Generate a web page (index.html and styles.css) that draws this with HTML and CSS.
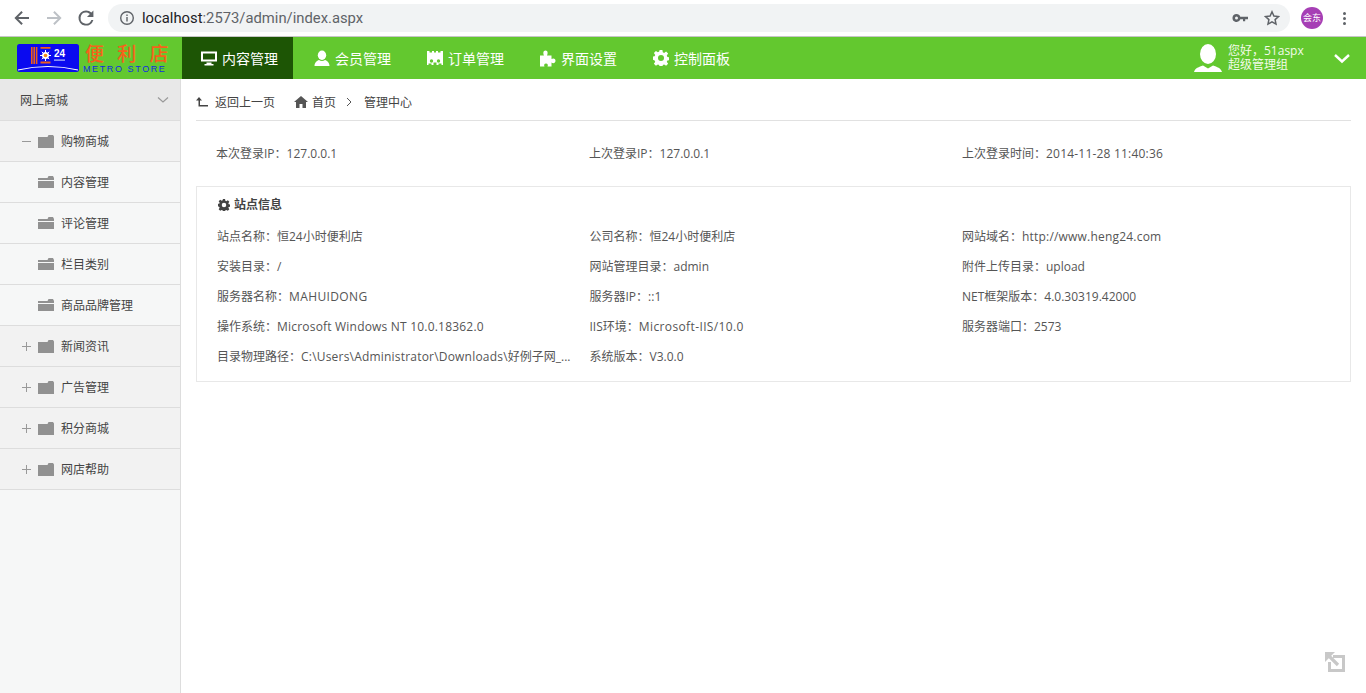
FILE: index.html
```html
<!DOCTYPE html>
<html lang="zh-CN">
<head>
<meta charset="utf-8">
<title>管理中心</title>
<link rel="stylesheet" href="styles.css">
</head>
<body>
<div class="chrome">
  <svg class="cb first" width="18" height="18" viewBox="0 0 18 18"><path d="M16 8H5.2l4.6-4.6L8.4 2 1.4 9l7 7 1.4-1.4L5.2 10H16z" fill="#5f6368"/></svg>
  <svg class="cb" width="18" height="18" viewBox="0 0 18 18"><path d="M2 8h10.8L8.2 3.4 9.6 2l7 7-7 7-1.4-1.4 4.6-4.6H2z" fill="#bdc1c6"/></svg>
  <svg class="cb" width="18" height="18" viewBox="0 0 18 18"><path d="M14.4 3.6A7.6 7.6 0 0 0 9 1.4a7.6 7.6 0 1 0 7.4 9.6h-2A5.6 5.6 0 1 1 9 3.4c1.5 0 2.900.6 3.900 1.700L10 8h6.400V1.600z" fill="#5f6368"/></svg>
  <div class="omni">
    <svg class="info" width="16" height="16" viewBox="0 0 16 16"><circle cx="8" cy="8" r="6.300" fill="none" stroke="#5f6368" stroke-width="1.400"/><path d="M7.300 7h1.400v4.400H7.300zM7.300 4.600h1.400V6H7.300z" fill="#5f6368"/></svg>
    <span class="url"><span class="host">localhost</span>:2573/admin/index.aspx</span>
    <svg class="key" width="16" height="16" viewBox="0 0 16 16"><path d="M4.500 4a4 4 0 1 0 3.800 5.200H11v2h2.200v-2H16V6.800H8.300A4 4 0 0 0 4.500 4zm0 2.500a1.500 1.500 0 1 1 0 3 1.500 1.500 0 0 1 0-3z" fill="#5f6368"/></svg>
    <svg class="star" width="16" height="16" viewBox="0 0 16 16"><path d="M8 1.800l1.900 4.200 4.600.5-3.400 3.100.9 4.500L8 11.800l-4 2.300.9-4.500L1.500 6.500 6.100 6z" fill="none" stroke="#5f6368" stroke-width="1.500"/></svg>
  </div>
  <span class="avatar">会东</span>
  <span class="dots"><i></i><i></i><i></i></span>
</div>

<header class="topbar">
  <div class="logo">
    <svg class="logo-badge" width="62" height="28" viewBox="0 0 62 28">
      <rect width="62" height="28" rx="2.500" fill="#0a0af0"/>
      <path d="M1 26Q31 19 61 26" fill="none" stroke="#fff" stroke-width="1.200"/>
      <path d="M14 3h1.600v17H14zM16.400 3H18v17h-1.600zM18.800 3h1.600v17h-1.600zM23.500 3h10v1.800h-10zM23.500 17.500h10v2h-10z" fill="#ef5d1c"/>
      <path d="M28.500 6v11M23 11.500h11M24.800 7.800l7.400 7.400M32.200 7.800l-7.400 7.400" stroke="#fff" stroke-width="1"/>
      <circle cx="28.500" cy="11.500" r="3.500" fill="#fff"/>
      <circle cx="28.500" cy="11.500" r="1.800" fill="#ef8a1c"/>
      <path d="M37 15.500h11v1.200H37z" fill="#b9c6f7"/>
    </svg>
    <span class="logo-num">24</span>
    <div class="logo-text">
      <span class="logo-cn">便 利 店</span>
      <span class="logo-en">METRO STORE</span>
    </div>
  </div>
  <nav class="nav">
    <a class="nav-item active">
      <svg width="16" height="16" viewBox="0 0 16 16"><path d="M0 1.500h16v10H0zM2 3.500v6h12v-6zM5.500 12.500h5V14h2v1.500h-9V14h2z" fill="#fff" fill-rule="evenodd"/></svg>内容管理</a>
    <a class="nav-item">
      <svg width="16" height="16" viewBox="0 0 16 16"><ellipse cx="8" cy="5.200" rx="4.200" ry="4.700" fill="#fff"/><path d="M.5 16c0-3.500 2.500-5.500 4.500-6 1.800 1.200 4.200 1.200 6 0 2 .5 4.500 2.500 4.500 6z" fill="#fff"/></svg>会员管理</a>
    <a class="nav-item">
      <svg width="16" height="16" viewBox="0 0 16 16"><path d="M0 1h2.500v1.500H5V1h2v1.500h2V1h2v1.500h2.500V1H16v14h-1.500v-1.500h-3V15h-2v-2.500h-3V15h-2v-1.500h-3V15H0z" fill="#fff"/><circle cx="4.500" cy="11" r="1.700" fill="#63c82f"/><circle cx="11.500" cy="11" r="1.700" fill="#63c82f"/></svg>订单管理</a>
    <a class="nav-item">
      <svg width="16" height="17" viewBox="0 0 16 17"><path d="M0 5.500h4C3 3.500 3 .5 5.500.5S8 3.500 7 5.500h4.500V9c1.500-1 4-.8 4 1.800s-2.500 2.800-4 1.800v3.900H7.500c.8-1.500.3-3-1.500-3s-2.300 1.500-1.500 3H0z" fill="#fff"/></svg>界面设置</a>
    <a class="nav-item">
      <svg width="16" height="16" viewBox="0 0 16 16"><path d="M6.600 0h2.800l.4 2.300 1.300.6 2-1.300 2 2-1.300 2 .6 1.300 2.300.4v2.800l-2.300.4-.6 1.300 1.300 2-2 2-2-1.300-1.300.6-.4 2.300H6.600l-.4-2.300-1.300-.6-2 1.300-2-2 1.300-2-.6-1.300L-.7 9.400V6.600l2.300-.4.6-1.300-1.300-2 2-2 2 1.300 1.300-.6zM8 5a3 3 0 1 0 0 6 3 3 0 0 0 0-6z" fill="#fff" fill-rule="evenodd"/></svg>控制面板</a>
  </nav>
  <div class="user">
    <svg width="28" height="28" viewBox="0 0 28 28"><ellipse cx="14" cy="10" rx="8" ry="10" fill="#fff"/><path d="M0 28c1-4 5-5 9-6.500l5 3 5-3c4 1.500 8 2.500 9 6.500z" fill="#fff"/></svg>
    <div class="user-text"><span>您好，51aspx</span><span>超级管理组</span></div>
    <svg class="user-caret" width="18" height="12" viewBox="0 0 18 12"><path d="M2 3l7 6.500L16 3" fill="none" stroke="#fff" stroke-width="2.400"/></svg>
  </div>
</header>

<div class="main">
  <aside class="side">
    <div class="side-head">网上商城
      <svg width="12" height="8" viewBox="0 0 12 8"><path d="M1 1.500l5 4.500 5-4.500" fill="none" stroke="#999" stroke-width="1.200"/></svg>
    </div>
    <div class="side-row group">
      <span class="tog minus"></span>
      <svg class="folder" width="16" height="13" viewBox="0 0 16 13"><path d="M0 2h9.500l1-2H15l1 1.500V13H0z" fill="#919191"/></svg>购物商城</div>
    <div class="side-row sub"><svg class="folder" width="16" height="12" viewBox="0 0 16 12"><path d="M0 4V2h9.500l1-2H15l1 2v2zM0 5h16v7H0z" fill="#919191"/></svg>内容管理</div>
    <div class="side-row sub"><svg class="folder" width="16" height="12" viewBox="0 0 16 12"><path d="M0 4V2h9.500l1-2H15l1 2v2zM0 5h16v7H0z" fill="#919191"/></svg>评论管理</div>
    <div class="side-row sub"><svg class="folder" width="16" height="12" viewBox="0 0 16 12"><path d="M0 4V2h9.500l1-2H15l1 2v2zM0 5h16v7H0z" fill="#919191"/></svg>栏目类别</div>
    <div class="side-row sub"><svg class="folder" width="16" height="12" viewBox="0 0 16 12"><path d="M0 4V2h9.500l1-2H15l1 2v2zM0 5h16v7H0z" fill="#919191"/></svg>商品品牌管理</div>
    <div class="side-row group"><span class="tog plus"></span><svg class="folder" width="16" height="13" viewBox="0 0 16 13"><path d="M0 2h9.500l1-2H15l1 1.500V13H0z" fill="#919191"/></svg>新闻资讯</div>
    <div class="side-row group"><span class="tog plus"></span><svg class="folder" width="16" height="13" viewBox="0 0 16 13"><path d="M0 2h9.500l1-2H15l1 1.500V13H0z" fill="#919191"/></svg>广告管理</div>
    <div class="side-row group"><span class="tog plus"></span><svg class="folder" width="16" height="13" viewBox="0 0 16 13"><path d="M0 2h9.500l1-2H15l1 1.500V13H0z" fill="#919191"/></svg>积分商城</div>
    <div class="side-row group"><span class="tog plus"></span><svg class="folder" width="16" height="13" viewBox="0 0 16 13"><path d="M0 2h9.500l1-2H15l1 1.500V13H0z" fill="#919191"/></svg>网店帮助</div>
  </aside>

  <main class="content">
    <div class="crumbs">
      <svg width="12" height="10" viewBox="0 0 12 10"><path d="M3 0l3 3.500H4V8h8v1.500H2.500v-6H0z" fill="#444"/></svg>
      <span class="back">返回上一页</span>
      <svg width="14" height="12" viewBox="0 0 14 12"><path d="M7 0l7 6h-2v6H8.500V8h-3v4H2V6H0z" fill="#555"/></svg>
      <span class="home">首页</span>
      <svg class="gt" width="6" height="10" viewBox="0 0 6 10"><path d="M1 1l4 4-4 4" fill="none" stroke="#555" stroke-width="1"/></svg>
      <span>管理中心</span>
    </div>
    <div class="login-row">
      <span>本次登录IP：127.0.0.1</span>
      <span>上次登录IP：127.0.0.1</span>
      <span>上次登录时间：<span class="wide">2014-11-28 11:40:36</span></span>
    </div>
    <section class="panel">
      <h2 class="panel-title">
        <svg width="12" height="12" viewBox="0 0 16 16"><path d="M6.600 0h2.800l.4 2.300 1.300.6 2-1.300 2 2-1.300 2 .6 1.300 2.300.4v2.800l-2.300.4-.6 1.300 1.300 2-2 2-2-1.300-1.300.6-.4 2.300H6.600l-.4-2.300-1.300-.6-2 1.300-2-2 1.300-2-.6-1.300L-.7 9.400V6.600l2.300-.4.6-1.300-1.300-2 2-2 2 1.300 1.300-.6zM8 5a3 3 0 1 0 0 6 3 3 0 0 0 0-6z" fill="#444" fill-rule="evenodd"/></svg>站点信息</h2>
      <div class="grid">
        <span>站点名称：恒24小时便利店</span>
        <span>公司名称：恒24小时便利店</span>
        <span>网站域名：<span class="wide">http://www.heng24.com</span></span>
        <span>安装目录：/</span>
        <span>网站管理目录：admin</span>
        <span>附件上传目录：upload</span>
        <span>服务器名称：<span class="wider">MAHUIDONG</span></span>
        <span>服务器IP：::1</span>
        <span>NET框架版本：4.0.30319.42000</span>
        <span>操作系统：<span class="wide">Microsoft Windows NT 10.0.18362.0</span></span>
        <span>IIS环境：<span class="wider">Microsoft-IIS/10.0</span></span>
        <span>服务器端口：2573</span>
        <span class="clip">目录物理路径：<span class="wide">C:\Users\Administrator\Downloads\</span>好例子网_...</span>
        <span>系统版本：V3.0.0</span>
      </div>
    </section>
  </main>
</div>
<svg class="fullscreen" width="21" height="21" viewBox="0 0 21 21"><path d="M3 10h3v7h11V6H8V3h12v17H3z" fill="#c8c8c8"/><path d="M0 0h10L0 10z" fill="#c8c8c8"/><path d="M3 3l10 10" stroke="#c8c8c8" stroke-width="3.200" fill="none"/></svg>
</body>
</html>
```
FILE: styles.css
```css
* { box-sizing: border-box; }
html, body { margin: 0; height: 100%; overflow: hidden; }
body {
  position: relative;
  font-family: "Open Sans", "Noto Sans CJK SC", sans-serif;
  font-size: 12px;
  color: #555;
  background: #fff;
  display: flex;
  flex-direction: column;
}
.wide { letter-spacing: .2px; }
.wider { letter-spacing: .38px; }
.chrome {
  height: 37px;
  flex: none;
  display: flex;
  align-items: center;
  background: #fff;
  border-bottom: 1px solid #c6c6c6;
}
.cb { margin-right: 14px; }
.cb.first { margin-left: 13px; }
.omni {
  width: 1182px;
  height: 28px;
  margin-left: -1px;
  border-radius: 14px;
  background: #f1f3f4;
  display: flex;
  align-items: center;
  padding: 0 10px 0 11px;
}
.info { margin-right: 7px; }
.url { font-family: "Roboto", sans-serif; font-size: 14.800px; color: #5f6368; }
.host { color: #202124; }
.key { margin-left: auto; margin-right: 16px; }
.avatar {
  width: 22px; height: 22px; border-radius: 50%;
  margin-left: 11px;
  background: #a63fb5; color: #fff;
  font-size: 9px; line-height: 22px; text-align: center;
}
.dots { display: flex; flex-direction: column; gap: 2px; margin-left: 20px; }
.dots i { display: block; width: 3px; height: 3px; border-radius: 50%; background: #5f6368; }

.topbar {
  height: 42px;
  flex: none;
  background: #63c82f;
  display: flex;
  align-items: stretch;
}
.logo { width: 182px; flex: none; display: flex; align-items: center; padding-left: 17px; position: relative; }
.logo-badge { flex: none; }
.logo-num {
  position: absolute; left: 54px; top: 11px;
  font: bold 10px "Liberation Sans", sans-serif; color: #fff;
}
.logo-text { display: flex; flex-direction: column; margin-left: 4px; }
.logo-cn { font-size: 19px; font-weight: 500; line-height: 22px; color: #f5621a; white-space: pre; word-spacing: 9px; padding-left: 2px; font-family: "Noto Sans CJK SC", sans-serif; }
.logo-en { font: 9px/10px "Liberation Sans", sans-serif; color: #1228e6; letter-spacing: 1.600px; white-space: nowrap; }
.nav { display: flex; }
.nav-item {
  width: 111px;
  margin-right: 2px;
  display: flex;
  align-items: center;
  gap: 5px;
  padding-left: 19px;
  color: #fff;
  font-size: 14px;
}
.nav-item.active { background: #1d5505; }
.user { margin-left: auto; display: flex; align-items: center; }
.user-text { display: flex; flex-direction: column; color: #f2fbe9; font-size: 12px; line-height: 14px; margin-left: 6px; width: 105px; }
.user-caret { margin-right: 15px; }

.main { flex: 1; display: flex; min-height: 0; }
.side { width: 181px; flex: none; background: #f6f7f7; border-right: 1px solid #ddd; color: #444; }
.side-head {
  height: 42px;
  background: #e8e8e8;
  border-bottom: 1px solid #ddd;
  display: flex; align-items: center; justify-content: space-between;
  padding: 1px 11px 0 20px;
  color: #444;
}
.side-row {
  height: 41px;
  display: flex; align-items: center;
  border-bottom: 1px solid #ddd;
  padding-left: 38px;
}
.side-row.group { background: #f2f2f2; padding-left: 22px; }
.folder { margin-right: 7px; flex: none; }
.tog { width: 9px; height: 9px; margin-right: 7px; position: relative; flex: none; }
.tog::before { content: ""; position: absolute; left: 0; top: 4px; width: 9px; height: 1px; background: #999; }
.tog.plus::after { content: ""; position: absolute; left: 4px; top: 0; width: 1px; height: 9px; background: #999; }

.content { flex: 1; min-width: 0; padding: 0 15px; }
.crumbs {
  height: 42px;
  padding-top: 4px;
  display: flex; align-items: center;
  border-bottom: 1px solid #e1e1e1;
  color: #444;
}
.back { margin: 0 19px 0 7px; }
.home { margin: 0 10px 0 4px; }
.gt { margin-right: 12px; }
.login-row {
  display: grid;
  grid-template-columns: repeat(3, 373px);
  padding: 24px 0 24px 20px;
  line-height: 18px;
  height: 65px;
}
.panel {
  height: 196px;
  border: 1px solid #e8e8e8;
  padding: 9px 20px 0;
}
.panel-title {
  margin: 0 0 7px 1px;
  display: flex; align-items: center; gap: 4px;
  font-size: 12px; font-weight: bold; color: #444;
  line-height: 18px;
}
.grid { display: grid; grid-template-columns: repeat(3, 372.500px); grid-auto-rows: 30px; align-items: center; }
.clip { width: 356px; white-space: nowrap; overflow: hidden; }
.fullscreen { position: absolute; right: 20px; bottom: 20px; }
```
